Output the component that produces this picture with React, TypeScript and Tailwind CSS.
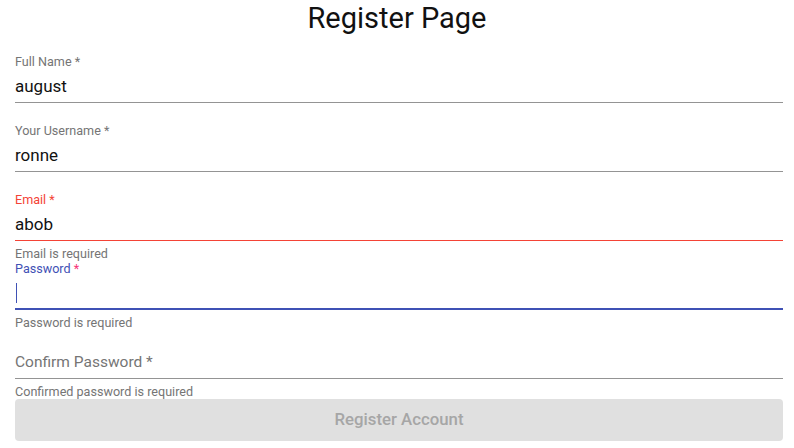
import React from "react";

type FieldProps = {
  label: string;
  value?: string;
  state?: "normal" | "error" | "focused" | "empty";
  helper?: string;
};

const Field = ({ label, value, state = "normal", helper }: FieldProps) => {
  const labelColor =
    state === "error" ? "text-[#f44336]" : state === "focused" ? "text-[#3f51b5]" : "text-[#757575]";
  const underline =
    state === "error"
      ? "border-b border-[#f44336]"
      : state === "focused"
      ? "border-b-2 border-[#3f51b5]"
      : "border-b border-[#949494]";

  return (
    <div className="flex flex-col">
      <div className={`relative flex h-[48px] flex-col ${underline}`}>
        {state === "empty" ? (
          <div className="absolute left-0 top-[23px] text-[15.5px] leading-[16px] text-[#757575]">{label}</div>
        ) : (
          <div className={`mt-[1px] h-[15px] text-[12.6px] leading-[12px] ${labelColor}`}>
            {state === "focused" ? (
              <>
                {label.replace(" *", "")}
                <span className="text-[#f73378]"> *</span>
              </>
            ) : (
              label
            )}
          </div>
        )}
        <div className="flex h-[32px] items-center pt-[1px] text-[17px] leading-[19px] text-[#111]">
          {state === "focused" ? <span className="ml-px h-[20px] w-px bg-[#3f51b5]" /> : value}
        </div>
      </div>
      <div className="mt-[3px] h-[18px] text-[12.6px] leading-[20px] text-[#757575]">{helper}</div>
    </div>
  );
};

export default function App() {
  return (
    <div className="w-[794px] bg-white font-['Roboto',sans-serif]">
      <h1 className="text-center text-[29px] leading-[36px] font-normal text-[#111]">Register Page</h1>
      <div className="ml-[15px] mt-[19px] flex w-[768px] flex-col">
        <Field label="Full Name *" value="august" />
        <Field label="Your Username *" value="ronne" />
        <Field label="Email *" value="abob" state="error" helper="Email is required" />
        <Field label="Password *" state="focused" helper="Password is required" />
        <Field label="Confirm Password *" state="empty" helper="Confirmed password is required" />
        <button
          disabled
          className="-mt-[1px] h-[42px] w-full rounded-[4px] bg-[#e0e0e0] text-[16.8px] font-medium text-[#a6a6a6]"
        >
          Register Account
        </button>
      </div>
    </div>
  );
}
